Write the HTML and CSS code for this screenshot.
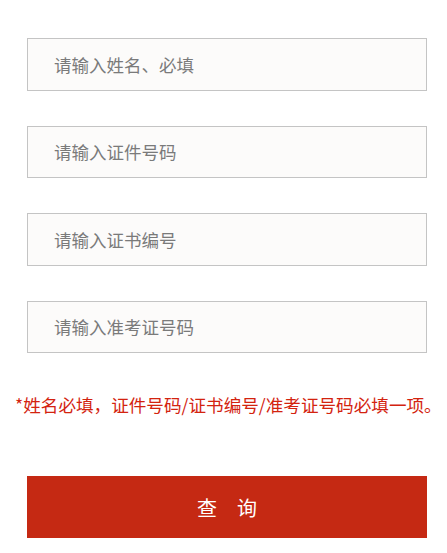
FILE: index.html
```html
<!DOCTYPE html>
<html lang="zh-CN">
<head>
<meta charset="utf-8">
<link rel="stylesheet" href="styles.css">
</head>
<body>
<div class="form">
  <div class="field"><input class="input" type="text" placeholder="请输入姓名、必填"></div>
  <div class="field"><input class="input" type="text" placeholder="请输入证件号码"></div>
  <div class="field"><input class="input" type="text" placeholder="请输入证书编号"></div>
  <div class="field"><input class="input" type="text" placeholder="请输入准考证号码"></div>
  <p class="note">*姓名必填，证件号码/证书编号/准考证号码必填一项。</p>
  <button class="btn" type="button">查　询</button>
</div>
</body>
</html>
```
FILE: styles.css
```css
html, body {
  margin: 0;
  padding: 0;
  background: #ffffff;
  font-family: "Noto Sans CJK SC", "Noto Sans", sans-serif;
}
.form {
  padding: 38px 0 0 27px;
  width: 400px;
  display: flex;
  flex-direction: column;
}
.field {
  margin-bottom: 35px;
}
.input {
  box-sizing: border-box;
  display: block;
  width: 400px;
  height: 52.5px;
  border: 1px solid #c4c4c4;
  background: #fcfbfa;
  padding: 0 0 0 26px;
  margin: 0;
  font-family: inherit;
  font-size: 17.5px;
  color: #555;
  outline: none;
}
.input::placeholder {
  color: #7a7a7a;
}
.note {
  margin: 5px 0 0 -12px;
  width: 430px;
  white-space: nowrap;
  font-size: 17.6px;
  line-height: 24px;
  color: #d3230f;
}
.btn {
  margin-top: 59px;
  width: 400px;
  height: 62px;
  border: 0;
  background: #c52913;
  color: #fff;
  font-family: inherit;
  font-size: 20px;
  letter-spacing: 0;
  padding: 0;
}
```
